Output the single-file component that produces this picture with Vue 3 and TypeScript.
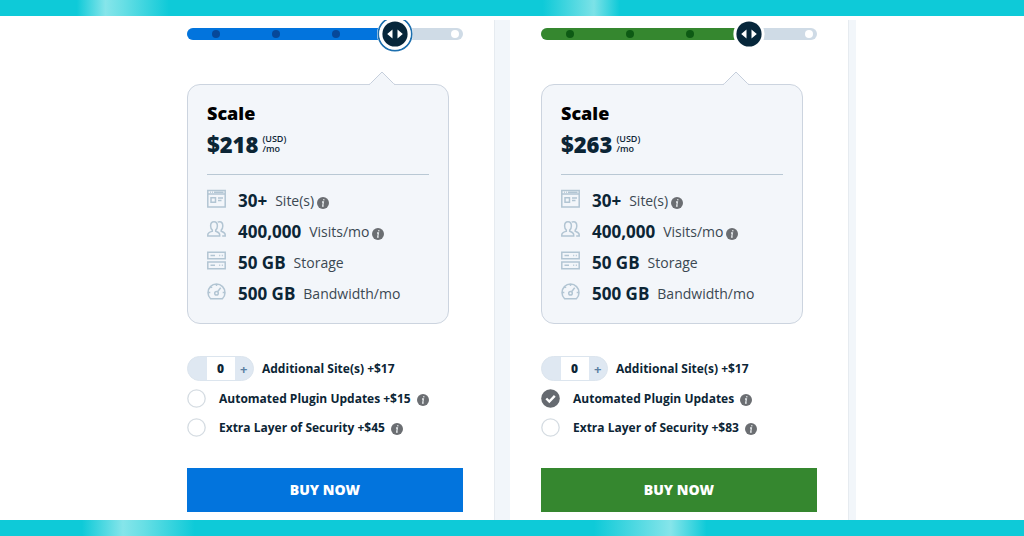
<script setup lang="ts">
import { reactive } from 'vue'

interface Feature {
  icon: 'sites' | 'visits' | 'storage' | 'bandwidth'
  amount: string
  label: string
  info: boolean
}

interface Addon {
  id: string
  label: string
  checked: boolean
}

interface Plan {
  id: string
  theme: 'blue' | 'green'
  price: string
  level: number
  sites: number
  addons: Addon[]
}

const stops = [1, 2, 3, 4, 5]

const features: Feature[] = [
  { icon: 'sites', amount: '30+', label: 'Site(s)', info: true },
  { icon: 'visits', amount: '400,000', label: 'Visits/mo', info: true },
  { icon: 'storage', amount: '50 GB', label: 'Storage', info: false },
  { icon: 'bandwidth', amount: '500 GB', label: 'Bandwidth/mo', info: false },
]

const plans = reactive<Plan[]>([
  {
    id: 'first',
    theme: 'blue',
    price: '$218',
    level: 4,
    sites: 0,
    addons: [
      { id: 'updates', label: 'Automated Plugin Updates +$15', checked: false },
      { id: 'security', label: 'Extra Layer of Security +$45', checked: false },
    ],
  },
  {
    id: 'second',
    theme: 'green',
    price: '$263',
    level: 4,
    sites: 0,
    addons: [
      { id: 'updates', label: 'Automated Plugin Updates', checked: true },
      { id: 'security', label: 'Extra Layer of Security +$83', checked: false },
    ],
  },
])
</script>

<template>
  <div class="page">
    <div class="band band-top"></div>
    <main class="plans">
      <section v-for="plan in plans" :key="plan.id" class="plan" :class="[plan.theme, plan.id]">
        <div class="slider">
          <div class="fill"></div>
          <span
            v-for="stop in stops"
            :key="stop"
            class="stop"
            :class="{ ahead: stop > plan.level, current: stop === plan.level }"
          >
            <svg v-if="stop === plan.level" class="thumb" viewBox="0 0 38 38" aria-hidden="true">
              <circle v-if="plan.theme === 'blue'" cx="19" cy="19" r="18" fill="#fff" />
              <circle v-if="plan.theme === 'blue'" cx="19" cy="19" r="16.7" fill="none" stroke="#1d6fae" stroke-width="1.7" />
              <circle cx="19" cy="19" r="15.6" fill="#fff" />
              <circle cx="19" cy="19" r="12.6" fill="#06263a" />
              <path d="M11.2 19l5.3-4.4v8.8zM26.8 19l-5.3-4.4v8.8z" fill="#fff" />
            </svg>
          </span>
          <input v-model.number="plan.level" class="range" type="range" min="1" max="5" aria-label="Plan size" />
        </div>

        <div class="card">
          <svg class="pointer" viewBox="0 0 26 15" aria-hidden="true">
            <path d="M0 15L1 13L13 1L25 13L26 15z" fill="#f3f6fa" />
            <path d="M0 13.5Q1 13 1.500 12.500L13 1L24.500 12.500Q25 13 26 13.500" fill="none" stroke="#c6cfdc" />
          </svg>
          <h2>Scale</h2>
          <p class="price">
            <strong>{{ plan.price }}</strong>
            <span class="unit"><span>(USD)</span><span>/mo</span></span>
          </p>
          <ul class="features">
            <li v-for="f in features" :key="f.icon">
              <svg class="icon" viewBox="0 0 19 19" aria-hidden="true">
                <g v-if="f.icon === 'sites'">
                  <path d="M.8 1.500h17.400v16.500H.8zM.8 5h17.400M11 9h5M11 11.500h3.500" />
                  <path d="M3 3.200h.8M5 3.200h.8M7 3.200h9.500" />
                  <path d="M4 8.800h4.500v4.500H4z" />
                </g>
                <g v-else-if="f.icon === 'visits'">
                  <path d="M3.600 6c0-2.900 1.200-4.300 3.400-4.300s3.400 1.400 3.400 4.300c0 2-.7 3.100-1.700 4v1.300c1.800.7 4 1.200 4 3.500v1.200H.8v-1.200c0-2.300 2.500-2.900 4.500-3.500V10c-1-.9-1.700-2-1.700-4z" />
                  <path d="M10.700 2.200c.6-.4 1.200-.5 1.900-.5 2.100 0 3.200 1.500 3.200 4.300 0 2-.6 3.100-1.600 4v1.300c1.800.7 4 1.200 4 3.500v1.200h-3" />
                </g>
                <g v-else-if="f.icon === 'storage'">
                  <path d="M.8 1.300h17.400v6.500H.8zM.8 11h17.400v6.700H.8z" />
                  <path d="M3.500 4.500h4.500M12.200 4.500h1M14.800 4.500h1M3.500 14.300h4.500M12.200 14.300h1M14.800 14.300h1" />
                </g>
                <g v-else>
                  <path d="M3.600 16.700A8.500 8.500 0 1 1 15.400 16.700zM9.500 2v2M1.300 10.500h2M15.700 10.500h2M3.700 4.500l1.300 1.300" />
                  <path d="M10.600 9.800L13.700 5.800" />
                  <circle cx="9.500" cy="11.200" r="1.800" />
                </g>
              </svg>
              <b>{{ f.amount }}</b>
              <span class="label">{{ f.label }}</span>
              <svg v-if="f.info" class="info" viewBox="0 0 12 12" role="img" aria-label="More information">
                <circle cx="6" cy="6" r="6" />
                <path d="M6.900 2.200L6.700 3.300M5 5h1.400L5.700 9h1" />
              </svg>
            </li>
          </ul>
        </div>

        <div class="sites-row">
          <div class="stepper">
            <button type="button" aria-label="Remove a site" @click="plan.sites = Math.max(0, plan.sites - 1)"></button>
            <input :id="`${plan.id}-sites`" v-model.number="plan.sites" type="text" inputmode="numeric" />
            <button type="button" aria-label="Add a site" @click="plan.sites++">+</button>
          </div>
          <label :for="`${plan.id}-sites`">Additional Site(s) +$17</label>
        </div>
        <div v-for="addon in plan.addons" :key="addon.id" class="addon">
          <label>
            <input v-model="addon.checked" type="checkbox" />
            <svg class="tick" viewBox="0 0 19 19" aria-hidden="true">
              <g v-if="addon.checked">
                <circle cx="9.500" cy="9.500" r="9.300" fill="#666a70" />
                <path d="M5.300 9.500l3 3 5.500-5.700" fill="none" stroke="#fff" stroke-width="2.400" />
              </g>
              <circle v-else cx="9.500" cy="9.500" r="8.700" fill="#fff" stroke="#d5dce2" stroke-width="1.300" />
            </svg>
            <span>{{ addon.label }}</span>
          </label>
          <svg class="info" viewBox="0 0 12 12" role="img" aria-label="More information">
            <circle cx="6" cy="6" r="6" />
            <path d="M6.900 2.200L6.700 3.300M5 5h1.400L5.700 9h1" />
          </svg>
        </div>

        <button class="buy" type="button">BUY NOW</button>
      </section>
    </main>
    <div class="band band-bottom"></div>
  </div>
</template>

<style>
body {
  margin: 0;
  background: #fff;
}
</style>

<style scoped>
* {
  box-sizing: border-box;
}

.page {
  display: flex;
  flex-direction: column;
  min-height: 100vh;
  font-family: 'Open Sans', 'Noto Sans', sans-serif;
  color: #0c2535;
}

.band {
  height: 16px;
}

.band-top {
  background: linear-gradient(90deg, #0ecad8 7.5%, #86e5ea 10.3%, #68dfe5 12%, #0ecad8 16.500%, #0ecad8 53%, #7ce2e7 58%, #0ecad8 60.500%);
}

.band-bottom {
  background: linear-gradient(90deg, #0ecad8 8%, #86e5ea 12%, #68dfe5 14%, #0ecad8 19%, #0ecad8 58%, #86e5ea 65.500%, #0ecad8 69%);
}

.plans {
  flex: 1;
  display: grid;
  grid-template-columns: 156fr 338fr 16px 338fr 8px 168fr;
  padding: 4px 0 0;
}

.plans::before,
.plans::after {
  content: '';
  background: #f2f6fa;
  border-left: 1px solid #e6ebf0;
  grid-row: 1;
}

.plans::before {
  grid-column: 3;
}

.plans::after {
  grid-column: 5;
}

.plan {
  grid-row: 1;
  overflow: hidden;
  padding: 8px 31px;
}

.first {
  grid-column: 2;
}

.second {
  grid-column: 4;
}

.blue {
  --accent: #0274dd;
  --stop: #06489a;
}

.green {
  --accent: #35872f;
  --stop: #0d5a14;
}

.slider {
  position: relative;
  display: flex;
  align-items: center;
  justify-content: space-between;
  height: 12px;
  padding: 0 4px 0 25px;
  border-radius: 6px;
  background: #cfdbe6;
}

.fill {
  position: absolute;
  inset: 0 25% 0 0;
  border-radius: 6px 0 0 6px;
  background: var(--accent);
}

.stop {
  position: relative;
  width: 8px;
  height: 8px;
  border-radius: 50%;
  background: var(--stop);
}

.ahead {
  background: #fff;
}

.current {
  background: none;
}

.thumb {
  position: absolute;
  inset: -15px;
  width: 38px;
  height: 38px;
}

.range {
  position: absolute;
  inset: -10px 0 -10px 20px;
  margin: 0;
  opacity: 0;
}

.card {
  position: relative;
  margin: 44px 14px 0 0;
  padding: 16px 19px 14px;
  border: 1px solid #ccd4df;
  border-radius: 13px;
  background: #f3f6fa;
}

.pointer {
  position: absolute;
  top: -14px;
  right: 53px;
  width: 26px;
  height: 15px;
}

h2 {
  margin: 0;
  font-size: 18px;
  line-height: 24px;
  font-weight: 800;
  color: #000;
}

.price {
  display: flex;
  align-items: center;
  gap: 4px;
  height: 30px;
  margin: 4px 0 0;
}

.price strong {
  font-size: 22px;
  line-height: 30px;
  font-weight: 800;
}

.unit {
  display: flex;
  flex-direction: column;
  font-size: 9px;
  line-height: 10px;
  font-weight: 600;
}

.features {
  margin: 15px 0 0;
  padding: 10px 0 0;
  border-top: 1px solid #b9c8d4;
  list-style: none;
}

.features li {
  display: flex;
  align-items: center;
  height: 31px;
}

.icon {
  width: 19px;
  height: 19px;
  margin: 0 12px 5px 0;
  fill: none;
  stroke: #b2c5d3;
  stroke-width: 1.5;
}

.features b {
  margin-right: 8px;
  font-size: 17px;
  line-height: 24px;
}

.label {
  font-size: 14px;
  line-height: 24px;
  color: #3b4852;
}

.info {
  flex: none;
  width: 12px;
  height: 12px;
  margin: 4px 0 0 3px;
  fill: #6b6e72;
}

.info path {
  fill: none;
  stroke: #e4e8ea;
  stroke-width: 1.3;
}

.sites-row {
  display: flex;
  align-items: center;
  gap: 8px;
  margin: 32px 0 3px;
  font-size: 12px;
  line-height: 16px;
  font-weight: 700;
}

.stepper {
  display: flex;
  width: 67px;
  height: 25px;
  overflow: hidden;
  border: 1px solid #dce5ee;
  border-radius: 13px;
  background: #dfe8f2;
}

.stepper button {
  width: 19px;
  padding: 0;
  border: 0;
  background: none;
  font: 700 13px/22px 'Open Sans', sans-serif;
  color: #5b7fa3;
}

.stepper input {
  width: 28px;
  padding: 0;
  border: 0;
  background: #fff;
  font: 800 12px/22px 'Open Sans', sans-serif;
  text-align: center;
  color: #0c2535;
}

.addon {
  display: flex;
  align-items: center;
  height: 29px;
  font-size: 12px;
  line-height: 16px;
  font-weight: 700;
}

.addon label {
  position: relative;
  display: flex;
  align-items: center;
  gap: 13px;
}

.addon input {
  position: absolute;
  width: 19px;
  height: 19px;
  margin: 0;
  opacity: 0;
}

.addon .info {
  margin: 2px 0 0 6px;
}

.tick {
  width: 19px;
  height: 19px;
}

.buy {
  display: block;
  width: 100%;
  height: 44px;
  margin-top: 26px;
  padding: 0;
  border: 0;
  background: var(--accent);
  font: 800 14px/20px 'Open Sans', sans-serif;
  color: #fff;
}
</style>
